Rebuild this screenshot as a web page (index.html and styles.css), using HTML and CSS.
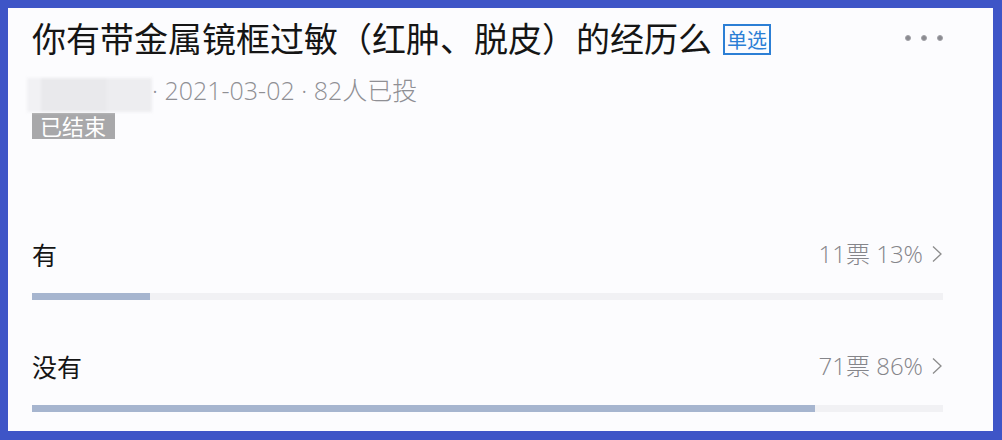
FILE: index.html
```html
<!DOCTYPE html>
<html lang="zh-CN">
<head>
<meta charset="utf-8">
<title>投票</title>
<link rel="stylesheet" href="styles.css">
</head>
<body>
<div class="frame">
  <div class="card">
    <div class="head">
      <h1 class="title">你有带金属镜框过敏（红肿、脱皮）的经历么<span class="badge">单选</span></h1>
      <div class="more"><i></i><i></i><i></i></div>
    </div>
    <div class="meta">
      <div class="blur"><span class="b1"></span><span class="b2"></span><span class="b3"></span></div>
      <span class="meta-text">· 2021-03-02 · 82人已投</span>
    </div>
    <div class="tag">已结束</div>

    <div class="options">
      <div class="option">
        <div class="opt-row">
          <span class="opt-label">有</span>
          <span class="opt-count">11票 13%<svg class="chev" viewBox="0 0 12 18" width="12" height="18"><path d="M2 1.5 L10 9 L2 16.5" fill="none" stroke="#8c8c8c" stroke-width="1.3"/></svg></span>
        </div>
        <div class="track"><div class="fill" style="width:13%"></div></div>
      </div>
      <div class="option">
        <div class="opt-row">
          <span class="opt-label">没有</span>
          <span class="opt-count">71票 86%<svg class="chev" viewBox="0 0 12 18" width="12" height="18"><path d="M2 1.5 L10 9 L2 16.5" fill="none" stroke="#8c8c8c" stroke-width="1.3"/></svg></span>
        </div>
        <div class="track"><div class="fill" style="width:86%"></div></div>
      </div>
    </div>
  </div>
</div>
</body>
</html>
```

FILE: styles.css
```css
* { box-sizing: border-box; }
html, body {
  margin: 0;
  padding: 0;
  background: #3e55c7;
}
body {
  font-family: "Noto Sans CJK SC", "Noto Sans", sans-serif;
}
.frame {
  width: 1002px;
  height: 440px;
  padding: 8px 9px 9px 8px;
}
.card {
  width: 985px;
  height: 423px;
  background: #fcfcfe;
  padding: 6px 50px 0 24px;
  display: flex;
  flex-direction: column;
}
.head {
  display: flex;
  align-items: flex-start;
  justify-content: space-between;
}
.title {
  margin: 0;
  font-size: 34px;
  line-height: 48px;
  font-weight: 400;
  color: #151515;
  letter-spacing: 0;
  display: flex;
  align-items: center;
}
.badge {
  margin-left: 11px;
  margin-top: 2px;
  border: 2px solid #2c7fd5;
  color: #2c7fd5;
  font-size: 20px;
  line-height: 27px;
  height: 31px;
  padding: 0 2px;
  letter-spacing: 0;
}
.more {
  display: flex;
  gap: 10px;
  margin-top: 21px;
}
.more i {
  width: 6px;
  height: 6px;
  border-radius: 50%;
  background: #8a8a8f;
  border: 1px solid #a2a2a8;
}
.meta {
  display: flex;
  align-items: flex-start;
  margin-top: 16px;
  margin-left: -5px;
  height: 34px;
}
.blur {
  width: 125px;
  height: 34px;
  display: flex;
  background: #efeff2;
  filter: blur(1.5px);
}
.blur span { display: block; height: 100%; }
.blur .b1 { width: 14px; background: #f1f1f4; }
.blur .b2 { width: 66px; background: #e9e9ec; }
.blur .b3 { width: 45px; background: #ededf0; }
.meta-text {
  font-family: "Open Sans", "Noto Sans CJK SC", sans-serif;
  font-weight: 300;
  font-size: 25px;
  color: #8f8f94;
  margin-left: 0;
  line-height: 24px;
}
.tag {
  align-self: flex-start;
  background: #a8a8aa;
  color: #fff;
  font-size: 22px;
  line-height: 25px;
  height: 26px;
  padding: 0 9px 0 8px;
  margin-top: 1px;
}
.options {
  margin-top: 98px;
  display: flex;
  flex-direction: column;
  gap: 49px;
}
.option {
  width: 911px;
}
.opt-row {
  display: flex;
  justify-content: space-between;
  align-items: center;
  height: 34px;
}
.opt-label {
  font-size: 25px;
  color: #151515;
  line-height: 34px;
}
.opt-count {
  font-family: "Open Sans", "Noto Sans CJK SC", sans-serif;
  font-weight: 300;
  font-size: 24px;
  color: #85858a;
  display: flex;
  align-items: center;
  gap: 8px;
  line-height: 34px;
}
.chev { display: block; }
.track {
  margin-top: 22px;
  height: 7px;
  background: #f1f1f4;
}
.fill {
  height: 100%;
  background: #a6b5cf;
}
```
